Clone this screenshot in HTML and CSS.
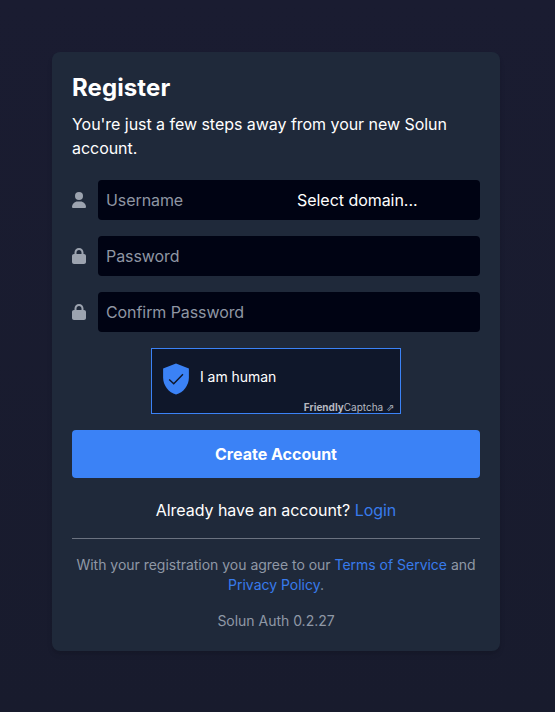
FILE: index.html
```html
<!DOCTYPE html>
<html lang="en">
<head>
<meta charset="utf-8">
<title>Register</title>
<link rel="stylesheet" href="styles.css">
</head>
<body>
<main class="card">
  <h1>Register</h1>
  <p class="intro">You're just a few steps away from your new Solun account.</p>
  <form>
    <div class="field">
      <svg class="icon" viewBox="0 0 448 512"><circle cx="224" cy="128" r="128"/><path d="M179 304h90c99 0 179 80 179 178c0 17-13 30-30 30H30c-17 0-30-13-30-30c0-98 80-178 179-178z"/></svg>
      <div class="box"><span class="name">Username</span><span class="domain">Select domain...</span></div>
    </div>
    <div class="field">
      <svg class="icon" viewBox="0 0 448 512"><path d="M144 144v48H304V144c0-44.200-35.800-80-80-80s-80 35.800-80 80zM80 192V144C80 64.500 144.500 0 224 0s144 64.500 144 144v48h16c35.300 0 64 28.700 64 64V448c0 35.300-28.700 64-64 64H64c-35.300 0-64-28.700-64-64V256c0-35.300 28.700-64 64-64H80z"/></svg>
      <div class="box">Password</div>
    </div>
    <div class="field">
      <svg class="icon" viewBox="0 0 448 512"><path d="M144 144v48H304V144c0-44.200-35.800-80-80-80s-80 35.800-80 80zM80 192V144C80 64.500 144.500 0 224 0s144 64.500 144 144v48h16c35.300 0 64 28.700 64 64V448c0 35.300-28.700 64-64 64H64c-35.300 0-64-28.700-64-64V256c0-35.300 28.700-64 64-64H80z"/></svg>
      <div class="box">Confirm Password</div>
    </div>
    <div class="captcha">
      <svg class="shield" viewBox="0 0 24 24"><path class="plate" d="M12 1 2.900 4.600v6.400c0 5.550 3.900 10.740 9.100 12 5.200-1.260 9.100-6.450 9.100-12V4.600L12 1z"/><path class="tick" d="m7.200 12.300 3.200 3 6.500-6.700"/></svg>
      <span class="human">I am human</span>
      <span class="brand"><b>Friendly</b>Captcha ⇗</span>
    </div>
    <button type="button">Create Account</button>
  </form>
  <p class="login">Already have an account? <a>Login</a></p>
  <hr>
  <p class="terms">With your registration you agree to our <a>Terms of Service</a> and <a>Privacy Policy</a>.</p>
  <p class="version">Solun Auth 0.2.27</p>
</main>
</body>
</html>
```
FILE: styles.css
```css
* { box-sizing: border-box; margin: 0; }
body {
  min-height: 100vh;
  padding: 52px 55px 0 52px;
  background: linear-gradient(to bottom, #1a1c31, #181b2d);
  color: #fff;
  font: 16px/24px Inter, sans-serif;
  letter-spacing: -0.04px;
}
.card {
  height: 599px;
  padding: 20px;
  border-radius: 8px;
  background: #1f293a;
  box-shadow: 0 4px 6px -1px rgba(0,0,0,.1), 0 2px 4px -2px rgba(0,0,0,.1);
}
h1 { font-size: 24px; line-height: 32px; font-weight: 700; margin-bottom: 8px; letter-spacing: 0.1px; }
.intro { margin-bottom: 20px; }
.field { display: flex; align-items: center; gap: 12px; margin-bottom: 16px; color: #8f96a3; }
.icon { width: 14px; height: 16px; fill: #9ca3af; }
.box { flex: 1; display: flex; height: 40px; padding: 8px; border-radius: 4px; background: #000313; letter-spacing: -0.08px; }
.name { width: 191px; }
.domain { color: #fff; letter-spacing: -0.04px; }
.captcha {
  position: relative;
  display: flex;
  width: 250px;
  height: 66px;
  margin: 0 auto 16px 79px;
  border: 1px solid #3b82f6;
  background: #0f172a;
}
.shield { width: 34px; height: 34px; margin: 13px 0 0 7px; }
.plate { fill: #3b82f6; }
.tick { fill: none; stroke: #0f172a; stroke-width: 1; }
.human { margin: 18px 0 0 7px; font-size: 14px; line-height: 20px; }
.brand { position: absolute; right: 6px; bottom: 0; color: #b6b9c0; font-size: 10px; line-height: 12px; letter-spacing: 0; }
button {
  display: block;
  width: 100%;
  height: 48px;
  border: 0;
  border-radius: 4px;
  background: #3b82f6;
  color: #fff;
  font: 700 16px/24px Inter, sans-serif;
}
.login { margin-top: 20px; text-align: center; }
a { color: #387bec; }
hr { margin: 16px 0; border: 0; border-top: 1px solid #6b7280; }
.terms, .version { color: #8f98a6; font-size: 14px; line-height: 20px; text-align: center; letter-spacing: -0.02px; }
.version { margin-top: 16px; }
```
